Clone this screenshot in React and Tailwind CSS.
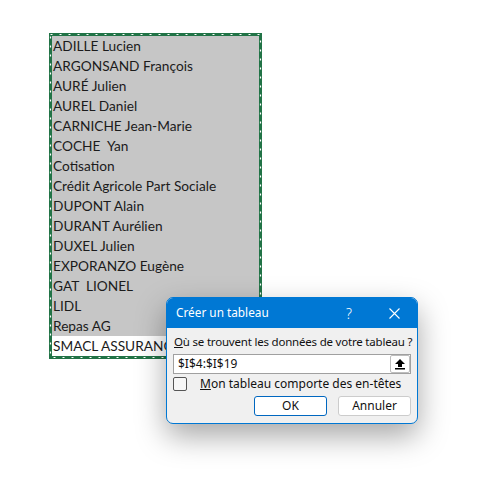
const names = [
  'ADILLE Lucien',
  'ARGONSAND François',
  'AURÉ Julien',
  'AUREL Daniel',
  'CARNICHE Jean-Marie',
  'COCHE  Yan',
  'Cotisation',
  'Crédit Agricole Part Sociale',
  'DUPONT Alain',
  'DURANT Aurélien',
  'DUXEL Julien',
  'EXPORANZO Eugène',
  'GAT  LIONEL',
  'LIDL',
  'Repas AG',
  'SMACL ASSURANCES',
];

function Marquee() {
  return (
    <svg className="absolute inset-0 pointer-events-none" width="213" height="326">
      <rect x="1.5" y="1.5" width="210" height="323" fill="none" stroke="#ffffff" strokeWidth="1.2" strokeDasharray="2 7" />
    </svg>
  );
}

function UploadIcon() {
  return (
    <svg width="12" height="12" viewBox="0 0 12 12">
      <path d="M6 1 L11 6 H8 V9 H4 V6 H1 Z" fill="#000" />
      <rect x="1" y="10" width="10" height="1.5" fill="#000" />
    </svg>
  );
}

function Dialog() {
  return (
    <div className="absolute left-[166px] top-[297px] w-[252px] rounded-[7px] border border-[#0078d4] bg-[#f0f0f0] shadow-[0_12px_30px_rgba(0,0,0,0.35)] overflow-hidden" style={{ fontFamily: '"Noto Sans", "Open Sans", sans-serif' }}>
      <div className="h-[30px] bg-[#0078d4] text-white flex items-center pl-[9px] pr-[17px]">
        <span className="text-[11.8px] flex-1">Créer un tableau</span>
        <span className="text-[14px] font-light mr-[37px]">?</span>
        <svg width="11" height="11" viewBox="0 0 11 11">
          <path d="M0.5 0.5 L10.5 10.5 M10.5 0.5 L0.5 10.5" stroke="#fff" strokeWidth="1.1" />
        </svg>
      </div>
      <div className="px-[6px] pt-[6px] pb-[7px] text-[12px] text-[#111]">
        <div className="leading-[16px] pl-[1px] whitespace-nowrap text-[11.5px] tracking-[-0.2px]"><span className="underline">O</span>ù se trouvent les données de votre tableau ?</div>
        <div className="mt-[4px] h-[20px] bg-white border border-[#a0a0a0] flex items-center pl-[4px] pr-[0px]">
          <span className="flex-1 leading-none">$I$4:$I$19</span>
          <div className="w-[20px] h-[18px] border border-[#bdbdbd] rounded-[2px] bg-white flex items-center justify-center">
            <UploadIcon />
          </div>
        </div>
        <div className="mt-[3px] flex items-center h-[14px]">
          <div className="w-[14px] h-[14px] border border-[#555] rounded-[2px] bg-[#f7f7f7]" />
          <span className="ml-[13px] whitespace-nowrap"><span className="underline">M</span>on tableau comporte des en-têtes</span>
        </div>
        <div className="mt-[5px] flex justify-end gap-[11px]">
          <button className="w-[73px] h-[20px] bg-white border border-[#0067c0] rounded-[3px] text-[12px] leading-none">OK</button>
          <button className="w-[73px] h-[20px] bg-white border border-[#cccccc] rounded-[3px] text-[12px] leading-none">Annuler</button>
        </div>
      </div>
    </div>
  );
}

export default function App() {
  return (
    <div className="relative w-[482px] h-[496px] bg-white overflow-hidden">
      <div className="absolute left-[49px] top-[33px] w-[213px] border-[3px] border-[#217346] bg-[#c6c6c6]">
        <div className="flex flex-col">
          {names.map((n, i) => (
            <div
              key={i}
              className={`h-[20px] pl-[1px] flex items-end pb-[1px] whitespace-pre overflow-hidden text-[13.7px] leading-[18px] text-[#1b1b1b] ${i === names.length - 1 ? 'bg-white' : ''}`}
              style={{ fontFamily: 'Lato, "Liberation Sans", sans-serif' }}
            >
              {n}
            </div>
          ))}
        </div>
        <div className="absolute -inset-[3px]">
          <Marquee />
        </div>
      </div>
      <Dialog />
    </div>
  );
}
